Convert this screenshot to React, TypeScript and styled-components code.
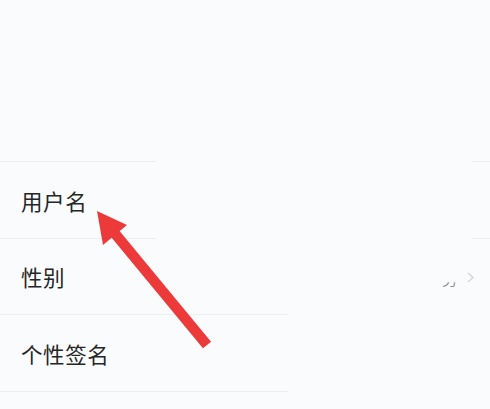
import React from 'react';
import styled, { createGlobalStyle } from 'styled-components';

const GlobalStyle = createGlobalStyle`
  html, body {
    margin: 0;
    padding: 0;
    background: #fafbfc;
  }
  body {
    font-family: "Noto Sans CJK SC", "Noto Sans", sans-serif;
  }
`;

const Page = styled.div`
  position: relative;
  width: 490px;
  height: 409px;
  overflow: hidden;
  background: #fafbfc;
`;

const TopSpace = styled.div`
  height: 161px;
`;

const List = styled.div`
  display: flex;
  flex-direction: column;
`;

const Divider = styled.div`
  display: flex;
  height: 1px;
`;

const Segment = styled.div<{ $width?: number; $hidden?: boolean }>`
  height: 1px;
  flex: ${(p) => (p.$width ? `0 0 ${p.$width}px` : '1')};
  background: ${(p) => (p.$hidden ? 'transparent' : '#eceef1')};
`;

const Row = styled.div<{ $height: number }>`
  height: ${(p) => p.$height}px;
  display: flex;
  align-items: center;
  justify-content: space-between;
  padding: 0 16px 0 21px;
`;

const Label = styled.span`
  font-size: 21.5px;
  color: #262626;
  letter-spacing: 0.6px;
`;

const Trailing = styled.div`
  display: flex;
  align-items: center;
  gap: 9px;
  margin-top: 4px;
`;

const Value = styled.span`
  font-size: 15px;
  color: #8a8f99;
  margin-right: 1px;
  clip-path: inset(68% 0 0 0);
`;

const Chevron = styled.svg`
  width: 7px;
  height: 11px;
  margin-top: -3px;
`;

const Arrow = styled.svg`
  position: absolute;
  left: 0;
  top: 0;
  width: 490px;
  height: 409px;
  pointer-events: none;
`;

const dividerTop = [
  { width: 156 },
  { width: 316, hidden: true },
  {},
];
const dividerBottom = [{ width: 288 }, { hidden: true }];

const Line: React.FC<{ parts: { width?: number; hidden?: boolean }[] }> = ({ parts }) => (
  <Divider>
    {parts.map((s, i) => (
      <Segment key={i} $width={s.width} $hidden={s.hidden} />
    ))}
  </Divider>
);

export default function App() {
  return (
    <Page>
      <GlobalStyle />
      <TopSpace />
      <List>
        <Line parts={dividerTop} />
        <Row $height={76}>
          <Label>用户名</Label>
        </Row>
        <Line parts={dividerTop} />
        <Row $height={75}>
          <Label>性别</Label>
          <Trailing>
            <Value>男</Value>
            <Chevron viewBox="0 0 7 11">
              <polyline points="1,1 6,5.5 1,10" fill="none" stroke="#d2d4d8" strokeWidth="1.3" />
            </Chevron>
          </Trailing>
        </Row>
        <Line parts={dividerBottom} />
        <Row $height={76}>
          <Label>个性签名</Label>
        </Row>
        <Line parts={dividerBottom} />
      </List>
      <Arrow viewBox="0 0 490 409">
        <line x1="112" y1="230" x2="207" y2="345" stroke="#ec3a3a" strokeWidth="10.5" />
        <polygon points="97,211 127,225 103,245" fill="#ec3a3a" />
      </Arrow>
    </Page>
  );
}
